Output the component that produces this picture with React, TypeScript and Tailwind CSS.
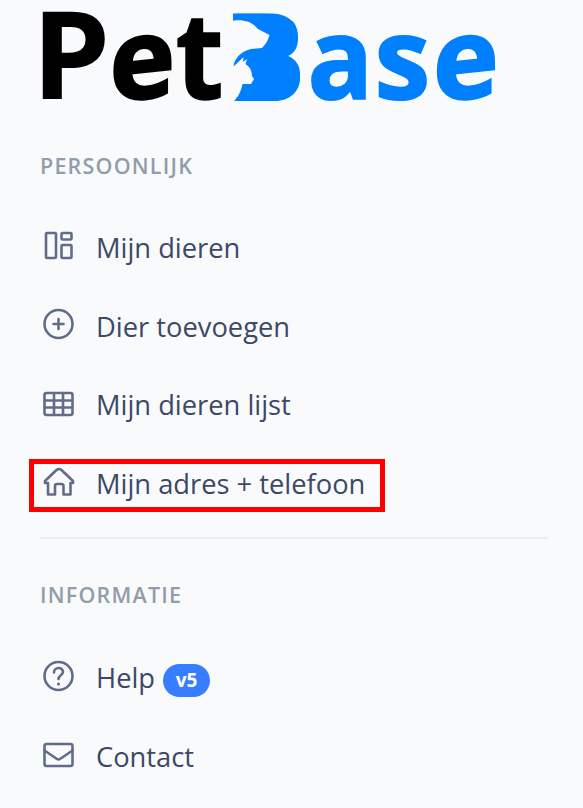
import React from "react";

const iconProps = {
  fill: "none",
  stroke: "#616d88",
  strokeWidth: 2.6,
  strokeLinecap: "round" as const,
  strokeLinejoin: "round" as const,
};

function Icon({ children }: { children: React.ReactNode }) {
  return (
    <svg viewBox="0 0 36 36" className="w-9 h-9 shrink-0" {...iconProps}>
      {children}
    </svg>
  );
}

function Logo() {
  return (
    <svg
      viewBox="0 0 583 112"
      className="block h-28 w-[583px] overflow-visible"
      fontFamily="'Open Sans', 'Noto Sans', sans-serif"
      fontWeight="700"
      fontSize="122"
    >
      <g fill="#000000">
        <text transform="translate(31.5 98.500) scale(1.03 1)">P</text>
        <text transform="translate(109.500 99) skewY(-6) translate(0 3) scale(.91 .92)" stroke="#000000" strokeWidth="2.5">e</text>
        <text transform="translate(175.500 99) scale(.91 .98)" stroke="#000000" strokeWidth="1.5">t</text>
      </g>
      <g fill="#007fff">
        <text transform="translate(226 101) scale(.98 1)">B</text>
        {/* fill the counters before cutting the animals out */}
        <path d="M233 13.500H272C289 13.500 298 25 298 38C298 47 295 53 288 56C296 59 300 69 300 78C300 92 289 101 275 101H234Z" />
        <text transform="translate(307.500 99) scale(.89 .93)" stroke="#007fff" strokeWidth="2">a</text>
        <text transform="translate(374.500 99) scale(.92 .93)" stroke="#007fff" strokeWidth="2">s</text>
        <text transform="translate(433 99) skewY(-6) translate(0 3) scale(.91 .92)" stroke="#007fff" strokeWidth="2.5">e</text>
      </g>
      <path
        fill="#f9fafc"
        d="M231 21.500C238 19 250 20 256 27L258 29L269.500 35C268 41 265 45 262 48L251 49C242 51 235 57 233 67L241 59.500L243.500 57L243 62L247 59L245.500 64C250 67 252 71 252 76L254 79L251 84H242.500C241 92 238 97 234 101L230 103Z"
      />
    </svg>
  );
}

function Heading({ children }: { children: React.ReactNode }) {
  return (
    <h2 className="h-8 pl-10 text-[21.5px] leading-8 font-semibold tracking-[1.2px] text-[#919daa]">{children}</h2>
  );
}

function Item({ icon, label, badge }: { icon: React.ReactNode; label: string; badge?: string }) {
  return (
    <a className="flex h-[78.7px] items-center pl-[41px]">
      <Icon>{icon}</Icon>
      <span className="mt-[3px] ml-[19px] text-[27.3px] leading-10 text-[#3d4867]">{label}</span>
      {badge && (
        <span className="mt-2 ml-2 flex h-[33px] w-[47px] items-center justify-center rounded-full bg-[#377dff] text-[19px] font-bold text-white">
          {badge}
        </span>
      )}
    </a>
  );
}

export default function App() {
  return (
    <nav className="relative h-[808px] w-[583px] bg-[#f9fafc] font-['Open_Sans','Noto_Sans',sans-serif]">
      <Logo />
      <div className="mt-[38px]">
        <Heading>PERSOONLIJK</Heading>
      </div>
      <div className="mt-[25px]">
        <Item
          label="Mijn dieren"
          icon={
            <>
              <rect x="5" y="5" width="10" height="25" rx="1" />
              <rect x="20.500" y="5" width="10" height="6.500" rx="1" />
              <rect x="20.500" y="17" width="10" height="13" rx="1" />
            </>
          }
        />
        <Item
          label="Dier toevoegen"
          icon={
            <>
              <circle cx="17.500" cy="17" r="14" />
              <path d="M17.500 12V22M12.500 17H22.500" />
            </>
          }
        />
        <Item
          label="Mijn dieren lijst"
          icon={
            <>
              <rect x="3.500" y="7" width="28" height="22" rx="2" />
              <path d="M4 14.500H31M4 21.500H31M13 7V29M22 7V29" />
            </>
          }
        />
        <Item
          label="Mijn adres + telefoon"
          icon={
            <path d="M4 17L15.500 6Q18 4 20.500 6L32 17V19H29.500V30.500H22.500V22Q22.500 20 20.500 20H16Q14 20 14 22V30.500H7V19H4Z" />
          }
        />
      </div>
      <hr className="mt-[15.5px] ml-10 w-[508px] border-t-2 border-[#e9ecf3]" />
      <div className="mt-10">
        <Heading>INFORMATIE</Heading>
      </div>
      <div className="mt-[26px]">
        <Item
          label="Help"
          badge="v5"
          icon={
            <>
              <circle cx="17.500" cy="17" r="14" />
              <path d="M13 13.500C13 7.500 22 7.500 22 13C22 16.500 17.500 16 17.500 20" />
              <circle cx="17.500" cy="25" r="1.600" fill="#616d88" stroke="none" />
            </>
          }
        />
        <Item
          label="Contact"
          icon={
            <>
              <rect x="3.500" y="7" width="28" height="22" rx="2" />
              <path d="M3.500 13.500L16 22Q17.500 23 19 22L31.500 13.500" />
            </>
          }
        />
      </div>
      {/* highlight around the address entry */}
      <div className="absolute top-[459px] left-[29px] h-[53px] w-[356px] border-5 border-[#ff0000]" />
    </nav>
  );
}
